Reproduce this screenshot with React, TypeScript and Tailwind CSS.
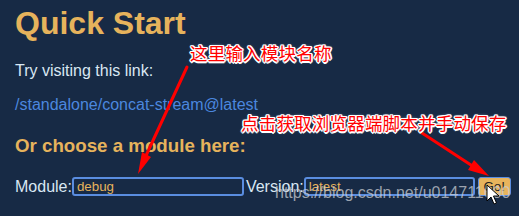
import React from 'react';

const outline =
  '[text-shadow:1.5px_0_0_#fff,-1.5px_0_0_#fff,0_1.5px_0_#fff,0_-1.5px_0_#fff,1px_1px_0_#fff,-1px_-1px_0_#fff,1px_-1px_0_#fff,-1px_1px_0_#fff,0_0_3px_#fff]';

export default function App() {
  return (
    <main className="relative w-[519px] h-[216px] overflow-hidden bg-[#172a45] font-['Liberation_Sans',Arial,sans-serif]">
      {/* Page content */}
      <div className="pl-[15px] pt-[5px]">
        <h1 className="text-[32px] leading-[37px] font-bold text-[#e6b35c]">Quick Start</h1>
        <p className="mt-[20px] text-[16px] leading-[18px] text-[#d9e7f3]">Try visiting this link:</p>
        <a href="#" className="block mt-[16px] text-[16px] leading-[18px] text-[#4b87df]">
          /standalone/concat-stream@latest
        </a>
        <h3 className="mt-[21px] text-[18.72px] leading-[22px] font-bold text-[#e6b35c]">
          Or choose a module here:
        </h3>

        <div className="mt-[20px] flex items-center whitespace-nowrap text-[16px] leading-[18px] text-[#d9e7f3]">
          <span className="shrink-0">Module:</span>
          <input
            readOnly
            value="debug"
            className="shrink-0 w-[172px] h-[19px] px-[3px] rounded-[3px] border-2 border-[#5a8de0] bg-transparent text-[13.33px] text-[#e6b35c] outline-none font-['Liberation_Sans',Arial,sans-serif]"
          />
          <span className="shrink-0 ml-[2px]">Version:</span>
          <input
            readOnly
            value="latest"
            className="shrink-0 w-[171px] h-[19px] px-[3px] rounded-[3px] border-2 border-[#5a8de0] bg-transparent text-[13.33px] text-[#e6b35c] outline-none font-['Liberation_Sans',Arial,sans-serif]"
          />
          <button className="shrink-0 ml-[3px] w-[33px] h-[19px] rounded-[3px] border border-[#5a8de0] bg-[#e8b45c] text-[13.33px] leading-none text-[#222]">
            Go!
          </button>
        </div>
      </div>

      {/* Annotation: arrows */}
      <svg className="absolute inset-0 pointer-events-none" width="519" height="216" viewBox="0 0 519 216">
        <line x1="187" y1="67" x2="144" y2="160" stroke="#ff0000" strokeWidth="3" strokeLinecap="round" />
        <polygon points="138,174 151,157 142,152" fill="#ff0000" />
        <line x1="422" y1="133" x2="474" y2="167" stroke="#ff0000" strokeWidth="3" strokeLinecap="round" />
        <polygon points="489,176 468,170 474,160" fill="#ff0000" />
      </svg>

      {/* Annotation: labels */}
      <div
        className={`absolute left-[190px] top-[42px] text-[17.5px] leading-[22px] text-[#ff0000] tracking-[0.2px] font-['Noto_Sans_CJK_SC',sans-serif] ${outline}`}
      >
        这里输入模块名称
      </div>
      <div
        className={`absolute left-[241px] top-[112px] text-[17.5px] leading-[22px] text-[#ff0000] tracking-[0.2px] font-['Noto_Sans_CJK_SC',sans-serif] ${outline}`}
      >
        点击获取浏览器端脚本并手动保存
      </div>

      {/* Watermark */}
      <div className="absolute left-[275px] top-[184px] text-[16px] leading-[18px] text-[#c8ccd2]/75 font-['Liberation_Sans',Arial,sans-serif]">
        https://blog.csdn.net/u014711690
      </div>

      {/* Mouse cursor */}
      <svg className="absolute left-[486px] top-[184px]" width="14" height="22" viewBox="0 0 14 22">
        <path d="M1 1 L1 17 L5 13 L8 20 L10.5 19 L7.5 12 L13 12 Z" fill="#fff" stroke="#000" strokeWidth="1" />
      </svg>
    </main>
  );
}
